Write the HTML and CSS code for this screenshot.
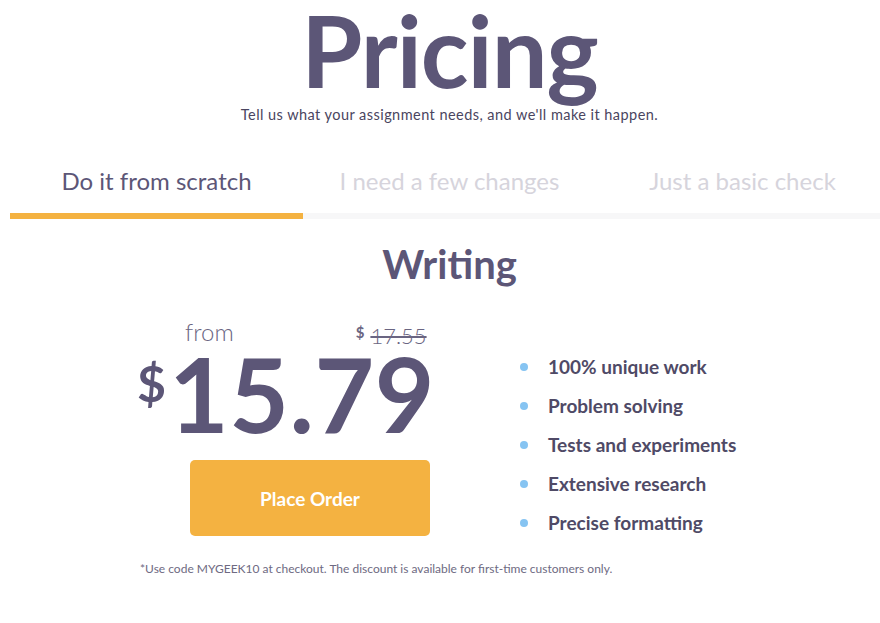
FILE: index.html
```html
<!DOCTYPE html>
<html lang="en">
<head>
<meta charset="utf-8">
<title>Pricing</title>
<link rel="stylesheet" href="styles.css">
</head>
<body>
<div class="page">
  <header class="hero">
    <h1 class="title">Pricing</h1>
    <p class="subtitle">Tell us what your assignment needs, and we'll make it happen.</p>
  </header>
  <nav class="tabs">
    <div class="tab active">Do it from scratch</div>
    <div class="tab">I need a few changes</div>
    <div class="tab">Just a basic check</div>
  </nav>
  <section class="plan">
    <h2 class="plan-title">Writing</h2>
    <div class="plan-body">
      <div class="price-col">
        <div class="price-top">
          <span class="from">from</span>
          <span class="old"><span class="old-cur">$</span> <s>17.55</s></span>
        </div>
        <div class="price"><span class="cur">$</span><span class="amount">15.79</span></div>
        <button class="order">Place Order</button>
      </div>
      <ul class="features">
        <li>100% unique work</li>
        <li>Problem solving</li>
        <li>Tests and experiments</li>
        <li>Extensive research</li>
        <li>Precise formatting</li>
      </ul>
    </div>
    <p class="note">*Use code MYGEEK10 at checkout. The discount is available for first-time customers only.</p>
  </section>
</div>
</body>
</html>
```

FILE: styles.css
```css
html, body {
  margin: 0;
  padding: 0;
  overflow: hidden;
  background: #ffffff;
}
body {
  font-family: Lato, "Noto Sans", sans-serif;
  color: #5c5677;
}
.page {
  width: 879px;
  margin-left: 10px;
}
.hero {
  text-align: center;
}
.title {
  margin: 0;
  font-size: 99px;
  line-height: 100px;
  font-weight: 700;
  color: #5c5677;
  letter-spacing: -1px;
}
.subtitle {
  margin: 0;
  margin-top: 5px;
  font-size: 14.5px;
  line-height: 20px;
  letter-spacing: 0.45px;
  color: #4a4560;
}
.tabs {
  display: flex;
  margin-top: 41px;
  border-bottom: 6px solid #f7f7f8;
}
.tab {
  flex: 1;
  text-align: center;
  font-size: 24px;
  line-height: 30px;
  padding-bottom: 17px;
  color: #d6d4dc;
  margin-bottom: -6px;
  border-bottom: 6px solid transparent;
}
.tab.active {
  color: #5c5677;
  border-bottom-color: #f4b241;
}
.plan {
  padding-top: 21px;
}
.plan-title {
  margin: 0;
  text-align: center;
  font-size: 40px;
  line-height: 48px;
  font-weight: 700;
  color: #5c5677;
}
.plan-body {
  display: flex;
  padding-left: 130px;
  margin-top: 31px;
}
.price-col {
  width: 340px;
}
.price-top {
  display: flex;
  padding-left: 45px;
  font-size: 24px;
  line-height: 26px;
}
.from {
  font-weight: 300;
  color: #6a6582;
}
.old {
  margin-left: 122px;
  color: #6a6582;
  font-weight: 300;
  font-size: 22px;
}
.old-cur {
  font-size: 15px;
  vertical-align: 6px;
  font-weight: 700;
}
.old s {
  text-decoration-thickness: 1.5px;
}
.price {
  display: flex;
  align-items: flex-start;
  height: 96px;
  margin-top: 2px;
  margin-left: -3px;
}
.cur {
  font-size: 50px;
  line-height: 60px;
  font-weight: 700;
  margin-top: 2px;
  margin-right: 3px;
}
.amount {
  font-size: 103px;
  line-height: 100px;
  font-weight: 700;
  letter-spacing: 0.5px;
  margin-top: -8px;
}
.order {
  display: block;
  margin-left: 50px;
  margin-top: 13px;
  width: 240px;
  height: 76px;
  border: none;
  border-radius: 5px;
  background: #f4b241;
  color: #ffffff;
  font-family: inherit;
  font-size: 19px;
  font-weight: 700;
}
.features {
  list-style: none;
  margin: 0;
  padding: 0;
  padding-left: 40px;
  padding-top: 28px;
}
.features li {
  position: relative;
  padding-left: 28px;
  font-size: 19px;
  line-height: 39px;
  font-weight: 700;
  color: #4f4a66;
}
.features li::before {
  content: "";
  position: absolute;
  left: 0;
  top: 16px;
  width: 8px;
  height: 8px;
  border-radius: 50%;
  background: #86c4f2;
}
.note {
  margin: 0;
  margin-top: 19px;
  padding-left: 130px;
  font-size: 12px;
  line-height: 16px;
  color: #6e6a82;
}
```
